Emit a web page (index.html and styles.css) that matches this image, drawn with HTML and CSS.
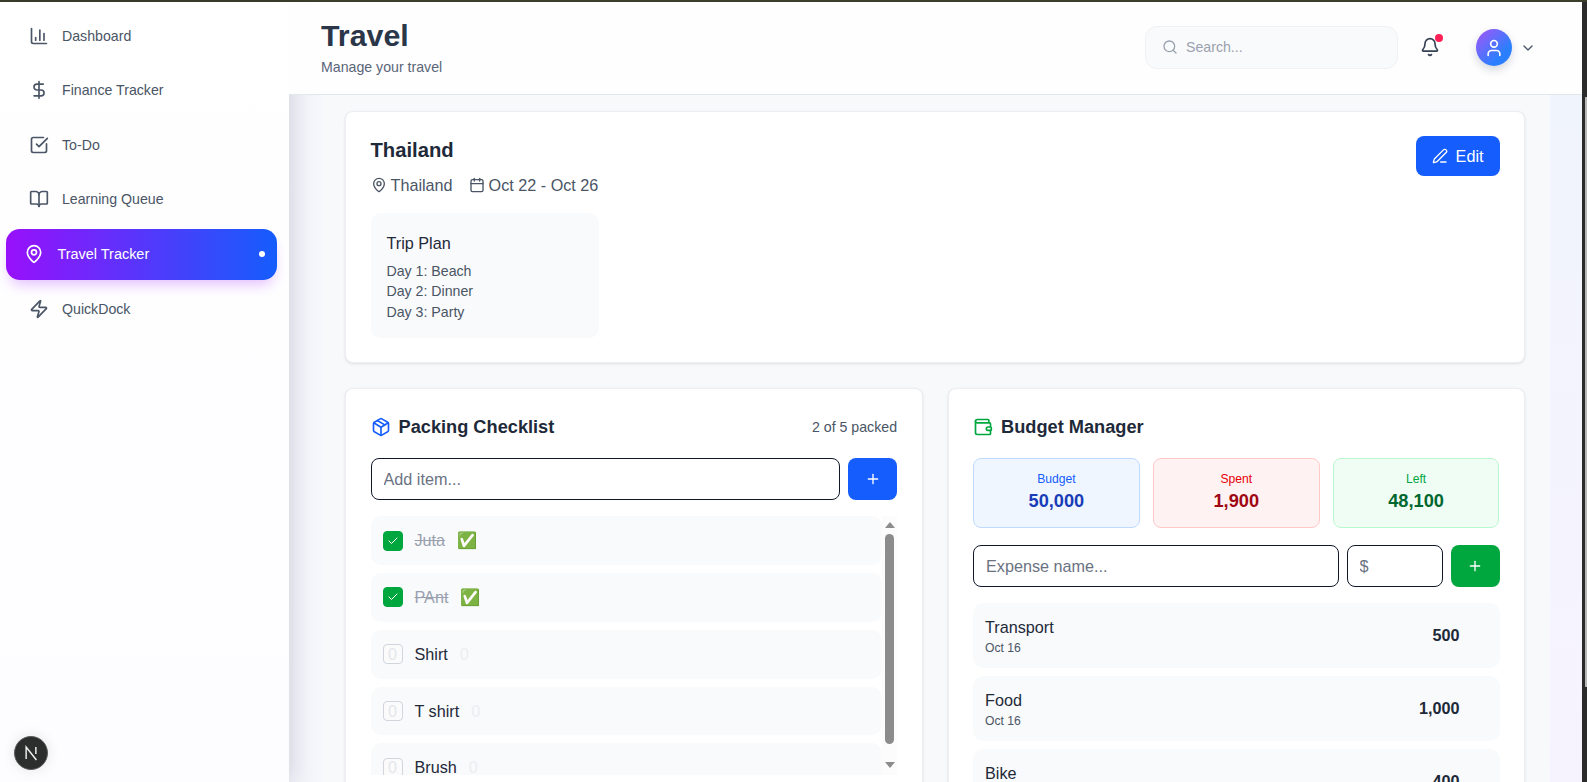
FILE: index.html
```html
<!DOCTYPE html>
<html lang="en">
<head>
<meta charset="utf-8">
<title>Travel</title>
<link rel="stylesheet" href="styles.css">
</head>
<body>
<div class="topline"></div>
<div class="frame">
  <aside class="sidebar">
    <nav class="nav">
      <a class="nav-item"><svg class="icon i20" viewBox="0 0 24 24"><path d="M3 3v16a2 2 0 0 0 2 2h16"/><path d="M18 17V9"/><path d="M13 17V5"/><path d="M8 17v-3"/></svg><span>Dashboard</span></a>
      <a class="nav-item"><svg class="icon i20" viewBox="0 0 24 24"><path d="M12 2v20"/><path d="M17 5H9.5a3.5 3.5 0 0 0 0 7h5a3.5 3.5 0 0 1 0 7H6"/></svg><span>Finance Tracker</span></a>
      <a class="nav-item"><svg class="icon i20" viewBox="0 0 24 24"><path d="M21 10.656V19a2 2 0 0 1-2 2H5a2 2 0 0 1-2-2V5a2 2 0 0 1 2-2h12.344"/><path d="m9 11 3 3L22 4"/></svg><span>To-Do</span></a>
      <a class="nav-item"><svg class="icon i20" viewBox="0 0 24 24"><path d="M12 7v14"/><path d="M3 18a1 1 0 0 1-1-1V4a1 1 0 0 1 1-1h5a4 4 0 0 1 4 4 4 4 0 0 1 4-4h5a1 1 0 0 1 1 1v13a1 1 0 0 1-1 1h-6a3 3 0 0 0-3 3 3 3 0 0 0-3-3z"/></svg><span>Learning Queue</span></a>
      <a class="nav-item active"><svg class="icon i20" viewBox="0 0 24 24"><path d="M20 10c0 4.993-5.539 10.193-7.399 11.799a1 1 0 0 1-1.202 0C9.539 20.193 4 14.993 4 10a8 8 0 0 1 16 0"/><circle cx="12" cy="10" r="3"/></svg><span>Travel Tracker</span><i class="active-dot"></i></a>
      <a class="nav-item"><svg class="icon i20" viewBox="0 0 24 24"><path d="M4 14a1 1 0 0 1-.78-1.63l9.9-10.2a.5.5 0 0 1 .86.46l-1.92 6.02A1 1 0 0 0 13 10h7a1 1 0 0 1 .78 1.63l-9.9 10.2a.5.5 0 0 1-.86-.46l1.92-6.02A1 1 0 0 0 11 14z"/></svg><span>QuickDock</span></a>
    </nav>
    <div class="next-badge"><svg viewBox="0 0 24 24" class="next-logo"><path d="M7.5 17.5V6.500l9.500 12"/><path d="M16.500 6.500V13"/></svg></div>
  </aside>

  <div class="main">
    <header class="header">
      <div class="head-text">
        <h1>Travel</h1>
        <p>Manage your travel</p>
      </div>
      <div class="head-tools">
        <label class="search"><svg class="icon i16" viewBox="0 0 24 24"><path d="m21 21-4.340-4.340"/><circle cx="11" cy="11" r="8"/></svg><span>Search...</span></label>
        <div class="bell"><svg class="icon i20" viewBox="0 0 24 24"><path d="M10.268 21a2 2 0 0 0 3.464 0"/><path d="M3.262 15.326A1 1 0 0 0 4 17h16a1 1 0 0 0 .74-1.673C19.410 13.956 18 12.499 18 8A6 6 0 0 0 6 8c0 4.499-1.411 5.956-2.738 7.326"/></svg><i class="bell-dot"></i></div>
        <div class="avatar"><svg class="icon i20" viewBox="0 0 24 24"><path d="M19 21v-2a4 4 0 0 0-4-4H9a4 4 0 0 0-4 4v2"/><circle cx="12" cy="7" r="4"/></svg></div>
        <svg class="icon i16 chevron" viewBox="0 0 24 24"><path d="m6 9 6 6 6-6"/></svg>
      </div>
    </header>

    <div class="content">
      <main class="inner">
        <section class="card trip">
          <div class="trip-top">
            <div>
              <h2>Thailand</h2>
              <div class="meta">
                <span class="meta-item"><svg class="icon i16" viewBox="0 0 24 24"><path d="M20 10c0 4.993-5.539 10.193-7.399 11.799a1 1 0 0 1-1.202 0C9.539 20.193 4 14.993 4 10a8 8 0 0 1 16 0"/><circle cx="12" cy="10" r="3"/></svg>Thailand</span>
                <span class="meta-item"><svg class="icon i16" viewBox="0 0 24 24"><path d="M8 2v4"/><path d="M16 2v4"/><rect width="18" height="18" x="3" y="4" rx="2"/><path d="M3 10h18"/></svg>Oct 22 - Oct 26</span>
              </div>
            </div>
            <button class="edit-btn"><svg class="icon i16" viewBox="0 0 24 24"><path d="M13 21h8"/><path d="M21.174 6.812a1 1 0 0 0-3.986-3.987L3.842 16.174a2 2 0 0 0-.5.83l-1.321 4.352a.5.5 0 0 0 .623.622l4.353-1.320a2 2 0 0 0 .83-.497z"/></svg><span>Edit</span></button>
          </div>
          <div class="plan">
            <h3>Trip Plan</h3>
            <p>Day 1: Beach</p>
            <p>Day 2: Dinner</p>
            <p>Day 3: Party</p>
          </div>
        </section>

        <div class="columns">
          <section class="card panel">
            <div class="panel-head">
              <h2 class="panel-title"><svg class="icon i20 blue" viewBox="0 0 24 24"><path d="M11 21.730a2 2 0 0 0 2 0l7-4A2 2 0 0 0 21 16V8a2 2 0 0 0-1-1.730l-7-4a2 2 0 0 0-2 0l-7 4A2 2 0 0 0 3 8v8a2 2 0 0 0 1 1.730z"/><path d="M12 22V12"/><path d="m3.300 7 7.703 4.734a2 2 0 0 0 1.994 0L20.700 7"/><path d="m7.500 4.270 9 5.150"/></svg>Packing Checklist</h2>
              <span class="count">2 of 5 packed</span>
            </div>
            <div class="form-row">
              <input class="field grow" type="text" placeholder="Add item...">
              <button class="add-btn blue-bg"><svg class="icon i16" viewBox="0 0 24 24"><path d="M5 12h14"/><path d="M12 5v14"/></svg></button>
            </div>
            <div class="list-wrap">
              <ul class="list">
                <li class="check-row"><span class="box done"><svg class="icon i12" viewBox="0 0 24 24"><path d="M20 6 9 17l-5-5"/></svg></span><span class="item done-text">Juta</span><span class="tag">✅</span></li>
                <li class="check-row"><span class="box done"><svg class="icon i12" viewBox="0 0 24 24"><path d="M20 6 9 17l-5-5"/></svg></span><span class="item done-text">PAnt</span><span class="tag">✅</span></li>
                <li class="check-row"><span class="box">0</span><span class="item">Shirt</span><span class="tag faint">0</span></li>
                <li class="check-row"><span class="box">0</span><span class="item">T shirt</span><span class="tag faint">0</span></li>
                <li class="check-row"><span class="box">0</span><span class="item">Brush</span><span class="tag faint">0</span></li>
              </ul>
              <div class="scrollbar">
                <svg class="arrow" viewBox="0 0 10 6"><path d="M5 0 10 6H0z"/></svg>
                <div class="thumb"></div>
                <svg class="arrow" viewBox="0 0 10 6"><path d="M0 0H10L5 6z"/></svg>
              </div>
            </div>
          </section>

          <section class="card panel">
            <div class="panel-head">
              <h2 class="panel-title"><svg class="icon i20 green" viewBox="0 0 24 24"><path d="M19 7V4a1 1 0 0 0-1-1H5a2 2 0 0 0 0 4h15a1 1 0 0 1 1 1v4h-3a2 2 0 0 0 0 4h3a1 1 0 0 0 1-1v-2a1 1 0 0 0-1-1"/><path d="M3 5v14a2 2 0 0 0 2 2h15a1 1 0 0 0 1-1v-4"/></svg>Budget Manager</h2>
            </div>
            <div class="stats">
              <div class="stat stat-blue"><span>Budget</span><b>50,000</b></div>
              <div class="stat stat-red"><span>Spent</span><b>1,900</b></div>
              <div class="stat stat-green"><span>Left</span><b>48,100</b></div>
            </div>
            <div class="form-row expense-form">
              <input class="field grow" type="text" placeholder="Expense name...">
              <input class="field amount" type="text" placeholder="$">
              <button class="add-btn green-bg"><svg class="icon i16" viewBox="0 0 24 24"><path d="M5 12h14"/><path d="M12 5v14"/></svg></button>
            </div>
            <ul class="expenses">
              <li class="expense"><div><div class="exp-name">Transport</div><div class="exp-date">Oct 16</div></div><b>500</b></li>
              <li class="expense"><div><div class="exp-name">Food</div><div class="exp-date">Oct 16</div></div><b>1,000</b></li>
              <li class="expense"><div><div class="exp-name">Bike</div><div class="exp-date">Oct 16</div></div><b>400</b></li>
            </ul>
          </section>
        </div>
      </main>
    </div>
  </div>

  <div class="page-scroll"><div class="page-thumb"></div></div>
</div>
</body>
</html>
```
FILE: styles.css
```css
* { box-sizing: border-box; }
html, body { height: 100%; }
body {
  margin: 0;
  overflow: hidden;
  display: flex;
  flex-direction: column;
  font-family: "Liberation Sans", Arial, sans-serif;
  color: #1e2939;
  background: #fff;
}
h1, h2, h3, p, ul { margin: 0; padding: 0; }
ul { list-style: none; }

.topline { height: 2px; flex: none; background: #3d3d2b; }
.frame { flex: 1; display: flex; min-height: 0; }

.icon { fill: none; stroke: currentColor; stroke-width: 2; stroke-linecap: round; stroke-linejoin: round; flex: none; display: block; }
.i20 { width: 20px; height: 20px; }
.i16 { width: 16px; height: 16px; }
.i12 { width: 12px; height: 12px; }
.blue { color: #155dfc; }
.green { color: #00a63e; }

/* Sidebar */
.sidebar {
  width: 289px;
  flex: none;
  position: relative;
  z-index: 1;
  background: linear-gradient(180deg, #ffffff 0%, #fdfcff 100%);
  box-shadow: 2px 0 22px rgba(20, 28, 40, .14);
  padding-top: 10.400px;
}
.nav { display: flex; flex-direction: column; gap: 8px; }
.nav-item {
  height: 46.600px;
  display: flex;
  align-items: center;
  gap: 13px;
  padding-left: 29px;
  font-size: 14.170px;
  color: #4a5565;
}
.nav-item.active {
  height: 51px;
  margin: -2.200px 11.600px -2.200px 6.400px;
  padding: 0 12px 0 17.600px;
  gap: 13.500px;
  border-radius: 14px;
  font-size: 14.450px;
  color: #fff;
  background: linear-gradient(90deg, #9810fa 0%, #155dfc 100%);
  box-shadow: 0 8px 14px -4px rgba(152, 16, 250, .28);
}
.active-dot { width: 6px; height: 6px; border-radius: 50%; background: #fff; margin-left: auto; }
.next-badge {
  position: absolute;
  left: 14px;
  bottom: 12px;
  width: 34px;
  height: 34px;
  border-radius: 50%;
  background: #2c2e2e;
  border: 1px solid #5c5c5c;
  display: flex;
  align-items: center;
  justify-content: center;
  box-shadow: 0 0 14px rgba(0, 0, 0, .1);
}
.next-logo { width: 26px; height: 26px; fill: none; stroke: #f4f4f4; stroke-width: 1.300; }

/* Main */
.main { flex: 1; min-width: 0; display: flex; flex-direction: column; }
.header {
  height: 93px;
  flex: none;
  position: relative;
  z-index: 2;
  display: flex;
  align-items: center;
  justify-content: space-between;
  padding: 0 46px 1px 32px;
  background: #fefeff;
  border-bottom: 1px solid #e3e6ea;
}
.head-text h1 { font-size: 30.360px; line-height: 36px; font-weight: 700; color: #2b3648; }
.head-text p { font-size: 14.170px; line-height: 20px; margin-top: 3px; color: #5a6577; }
.head-tools { display: flex; align-items: center; }
.search {
  width: 253px;
  height: 43px;
  display: flex;
  align-items: center;
  gap: 8px;
  padding: 0 0 2px 16px;
  border-radius: 12px;
  background: #f9fafb;
  border: 1px solid #f0f1f4;
  font-size: 14.170px;
  color: #99a1af;
}
.bell { position: relative; margin: 0 0 2px 22px; color: #364153; }
.bell-dot {
  position: absolute;
  top: -3px;
  right: -3px;
  width: 8px;
  height: 8px;
  border-radius: 50%;
  background: #ff2056;
}
.avatar {
  width: 36px;
  height: 37px;
  margin-left: 36px;
  border-radius: 50%;
  display: flex;
  align-items: center;
  justify-content: center;
  color: #fff;
  background: linear-gradient(135deg, #a855f7 0%, #2b7fff 70%);
  box-shadow: 0 4px 8px rgba(30, 41, 57, .18);
}
.chevron { margin-left: 8px; color: #4a5565; }

.content {
  flex: 1;
  min-height: 0;
  overflow: hidden;
  padding: 0 32px 0 33px;
  background:
    linear-gradient(90deg, #f0f2f8 0%, #f6f7fc 100%) left top / 33px 100% no-repeat,
    linear-gradient(180deg, #f0f4fd 0%, #f7f3fe 100%);
}
.inner { height: 100%; background: #f8f9fb; padding: 16px 25px 0 23px; display: flex; flex-direction: column; gap: 25px; }

.card {
  background: #fff;
  border: 1px solid #eceef1;
  border-radius: 8px;
  box-shadow: 0 1px 3px rgba(0, 0, 0, .1);
  padding: 24px 24.500px;
  flex: none;
}
.trip-top { display: flex; justify-content: space-between; align-items: flex-start; }
.trip h2 { font-size: 20.240px; line-height: 28px; font-weight: 700; color: #1e2939; }
.meta { display: flex; gap: 16px; margin-top: 9px; font-size: 16.200px; line-height: 24px; color: #4a5565; }
.meta-item { display: flex; align-items: center; gap: 4px; }
.edit-btn {
  height: 40px;
  display: flex;
  align-items: center;
  gap: 8px;
  padding: 0 16px;
  border: 0;
  border-radius: 8px;
  background: #155dfc;
  color: #fff;
  font: 16.200px "Liberation Sans", Arial, sans-serif;
}
.edit-btn span { padding-top: 1px; }
.plan {
  width: 228px;
  margin-top: 16px;
  padding: 18px 16px 16px;
  border-radius: 10px;
  background: #f9fafb;
  font-size: 14.170px;
  line-height: 20.400px;
  color: #4a5565;
}
.plan h3 { font-size: 16.200px; line-height: 24px; font-weight: 400; color: #1e2939; margin-bottom: 6px; }

.columns { display: grid; grid-template-columns: 1fr 1fr; gap: 25px; }
.panel { height: 500px; }
.panel-head { display: flex; justify-content: space-between; align-items: center; height: 28px; }
.panel-title { display: flex; align-items: center; gap: 8px; font-size: 18.220px; line-height: 28px; font-weight: 700; color: #1e2939; }
.count { font-size: 14.170px; color: #4a5565; }

.form-row { display: flex; gap: 8px; margin-top: 17px; }
.field {
  height: 42px;
  padding: 0 12px;
  border: 1px solid #101828;
  border-radius: 8px;
  background: #fff;
  font: 16.200px "Liberation Sans", Arial, sans-serif;
  color: #1e2939;
  min-width: 0;
}
.field::placeholder { color: #6a7282; opacity: 1; }
.grow { flex: 1; }
.amount { width: 96px; flex: none; }
.add-btn {
  width: 49px;
  height: 42px;
  flex: none;
  border: 0;
  border-radius: 8px;
  display: flex;
  align-items: center;
  justify-content: center;
  color: #fff;
}
.blue-bg { background: #155dfc; }
.green-bg { background: #00a63e; }

.list-wrap { display: flex; height: 259px; margin-top: 16px; }
.list { flex: 1; min-width: 0; display: flex; flex-direction: column; gap: 8px; overflow: hidden; }
.check-row {
  height: 48.800px;
  flex: none;
  display: flex;
  align-items: center;
  padding-left: 12px;
  gap: 12px;
  border-radius: 10px;
  background: #f9fafb;
  font-size: 16.200px;
  color: #1e2939;
}
.box {
  width: 20px;
  height: 20px;
  flex: none;
  display: flex;
  align-items: center;
  justify-content: center;
  border: 1px solid #d1d5dc;
  border-radius: 4px;
  color: #e5e7eb;
  background: #fbfbfc;
}
.box.done { background: #00a63e; border-color: #00a63e; color: #fff; }
.done-text { color: #99a1af; text-decoration: line-through; }
.tag { font-size: 16.200px; font-family: "Liberation Sans", "Noto Color Emoji", sans-serif; }
.faint { color: #eceef1; }

.scrollbar { width: 15px; flex: none; display: flex; flex-direction: column; align-items: center; background: #fcfcfc; }
.arrow { width: 10px; height: 6px; fill: #8c8c8c; flex: none; margin-top: 6px; }
.thumb { width: 9px; height: 210px; margin-top: 6px; border-radius: 5px; background: #8c8c8c; }
.thumb + .arrow { margin-top: 18px; }

.stats { display: grid; grid-template-columns: repeat(3, 1fr); gap: 13px; margin-top: 17px; }
.stat {
  height: 70px;
  border: 1px solid;
  border-radius: 8px;
  padding: 12px 0;
  display: flex;
  flex-direction: column;
  align-items: center;
  font-size: 12.150px;
  line-height: 16px;
}
.stat b { font-size: 18.220px; line-height: 28px; }
.stat-blue { background: #eff6ff; border-color: #bedbff; color: #155dfc; }
.stat-blue b { color: #193cb8; }
.stat-red { background: #fef2f2; border-color: #ffc9c9; color: #e7000b; }
.stat-red b { color: #9f0712; }
.stat-green { background: #f0fdf4; border-color: #b9f8cf; color: #00a63e; }
.stat-green b { color: #016630; }

.expense-form { margin-top: 17px; }
.expenses { display: flex; flex-direction: column; gap: 8px; margin-top: 16px; }
.expense {
  height: 65px;
  display: flex;
  justify-content: space-between;
  align-items: center;
  padding: 0 40px 0 12px;
  border-radius: 10px;
  background: #f9fafb;
  font-size: 16.200px;
}
.exp-name { line-height: 24px; color: #1e2939; }
.exp-date { font-size: 12.150px; line-height: 16px; color: #4a5565; margin-top: 1px; }

.page-scroll { width: 5px; flex: none; background: #2b2b2b; position: relative; z-index: 3; }
.page-thumb { width: 2px; height: 590px; margin: 95px 0 0 3px; background: #b8b8b8; }
```
